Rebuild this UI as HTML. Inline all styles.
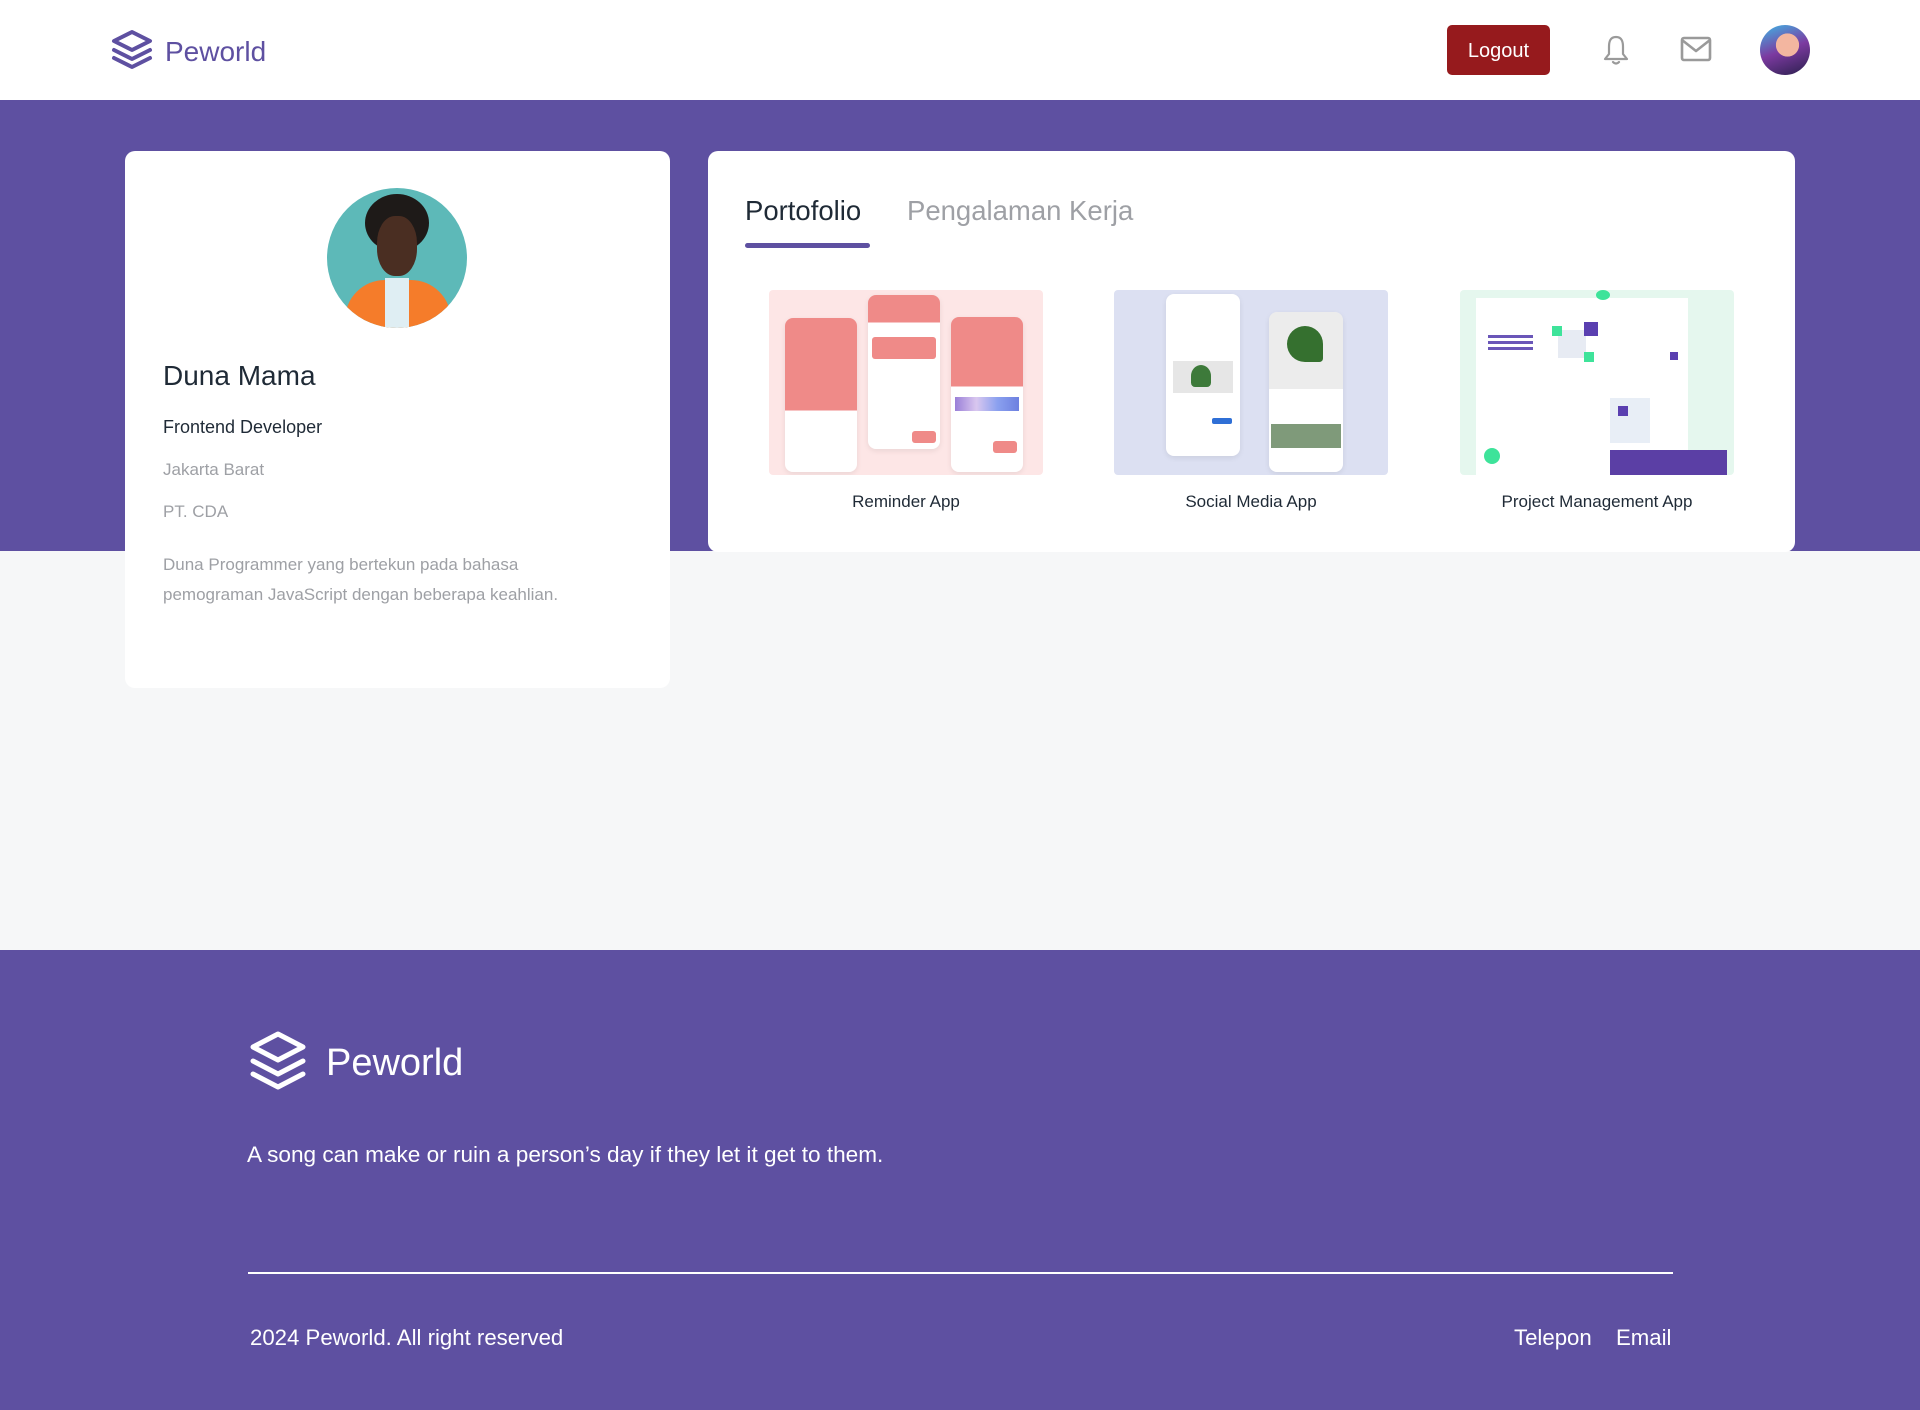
<!DOCTYPE html>
<html><head><meta charset="utf-8">
<style>
*{margin:0;padding:0;box-sizing:border-box}
body{width:1920px;height:1410px;position:relative;background:#F6F7F8;font-family:"Liberation Sans",sans-serif;overflow:hidden}
.abs{position:absolute}
.hdr{left:0;top:0;width:1920px;height:100px;background:#fff}
.band{left:0;top:100px;width:1920px;height:451px;background:#5E50A1}
.card{background:#fff;border-radius:10px}
.foot{left:0;top:950px;width:1920px;height:460px;background:#5E50A1}
.t{position:absolute;white-space:nowrap}
.ph{position:absolute;background:#fff;border-radius:8px;box-shadow:0 2px 6px rgba(0,0,0,.08)}
</style></head><body>
<div class="abs hdr"></div>
<svg class="abs" style="left:110px;top:29px" width="44" height="42" viewBox="0 0 44 42" fill="none" stroke="#5E50A1" stroke-width="4" stroke-linejoin="round" stroke-linecap="round"><path d="M22 3 L40 12 L22 21 L4 12 Z"/><path d="M4 21 L22 30 L40 21"/><path d="M4 29 L22 38 L40 29"/></svg>
<div class="t" style="left:165px;top:36px;font-size:28px;color:#5E50A1">Peworld</div>
<div class="abs" style="left:1447px;top:25px;width:103px;height:50px;background:#961A1D;border-radius:5px;color:#fff;font-size:20px;text-align:center;line-height:52px">Logout</div>
<svg class="abs" style="left:1600px;top:34px" width="32" height="32" viewBox="0 0 32 32" fill="none" stroke="#9a9a9a" stroke-width="2.2" stroke-linecap="round" stroke-linejoin="round"><path d="M16 3 C10 3 9 8 9 13 L9 20 L5 25 L27 25 L23 20 L23 13 C23 8 22 3 16 3Z"/><path d="M13 28 Q16 31 19 28"/></svg>
<svg class="abs" style="left:1680px;top:36px" width="32" height="26" viewBox="0 0 32 26" fill="none" stroke="#9a9a9a" stroke-width="2.6" stroke-linejoin="round"><rect x="2" y="2" width="28" height="22" rx="2"/><path d="M2 4 L16 15 L30 4"/></svg>
<div class="abs" style="left:1760px;top:25px;width:50px;height:50px;border-radius:50%;background:radial-gradient(circle at 55% 40%,#f3b6a0 0 28%,transparent 29%),linear-gradient(160deg,#3fb6e6,#7c3aa0 50%,#2a1f4d)"></div>

<div class="abs band"></div>
<div class="abs" style="left:0;top:551px;width:1920px;height:399px;background:#F6F7F8"></div>

<div class="abs card" style="left:125px;top:151px;width:545px;height:537px"></div>
<div class="abs" style="left:327px;top:188px;width:140px;height:140px;border-radius:50%;overflow:hidden;background:#5DB9B8">
 <div class="abs" style="left:18px;top:92px;width:106px;height:70px;border-radius:40px 40px 0 0;background:#F57C2A"></div>
 <div class="abs" style="left:58px;top:90px;width:24px;height:50px;background:#dfeef3"></div>
 <div class="abs" style="left:38px;top:6px;width:64px;height:58px;border-radius:50%;background:#1e1a18"></div>
 <div class="abs" style="left:50px;top:28px;width:40px;height:60px;border-radius:45%;background:#4a2e22"></div>
</div>
<div class="t" style="left:163px;top:360px;font-size:28px;color:#1F2A36">Duna Mama</div>
<div class="t" style="left:163px;top:417px;font-size:18px;color:#1F2A36">Frontend Developer</div>
<div class="t" style="left:163px;top:460px;font-size:17px;color:#9EA0A5">Jakarta Barat</div>
<div class="t" style="left:163px;top:502px;font-size:17px;color:#9EA0A5">PT. CDA</div>
<div class="t" style="left:163px;top:550px;font-size:17px;color:#9EA0A5;line-height:30px">Duna Programmer yang bertekun pada bahasa<br>pemograman JavaScript dengan beberapa keahlian.</div>

<div class="abs card" style="left:708px;top:151px;width:1087px;height:401px"></div>
<div class="t" style="left:745px;top:195px;font-size:27.5px;color:#1F2A36">Portofolio</div>
<div class="t" style="left:907px;top:195px;font-size:27.5px;color:#9EA0A5">Pengalaman Kerja</div>
<div class="abs" style="left:745px;top:243px;width:125px;height:5px;border-radius:3px;background:#5E50A1"></div>

<!-- thumb 1 -->
<div class="abs" style="left:769px;top:290px;width:274px;height:185px;background:#FDE6E6;border-radius:4px;overflow:hidden">
 <div class="ph" style="left:16px;top:28px;width:72px;height:154px;background:linear-gradient(#EF8A88 0 60%,#fff 60%)"></div>
 <div class="ph" style="left:99px;top:5px;width:72px;height:154px;background:linear-gradient(#EF8A88 0 18%,#fff 18%)"><div class="abs" style="left:4px;top:42px;width:64px;height:22px;background:#EF8A88;border-radius:3px"></div><div class="abs" style="left:44px;top:136px;width:24px;height:12px;background:#EF8A88;border-radius:3px"></div></div>
 <div class="ph" style="left:182px;top:27px;width:72px;height:155px;background:linear-gradient(#EF8A88 0 45%,#fff 45%)"><div class="abs" style="left:4px;top:80px;width:64px;height:14px;background:linear-gradient(90deg,#9a7fd8,#d9c7ef,#8aa0ef,#6d80e0)"></div><div class="abs" style="left:42px;top:124px;width:24px;height:12px;background:#EF8A88;border-radius:3px"></div></div>
</div>
<div class="t" style="left:769px;top:492px;width:274px;text-align:center;font-size:17px;color:#1F2A36">Reminder App</div>
<!-- thumb 2 -->
<div class="abs" style="left:1114px;top:290px;width:274px;height:185px;background:#DCE0F2;border-radius:4px;overflow:hidden">
 <div class="ph" style="left:52px;top:4px;width:74px;height:162px"><div class="abs" style="left:7px;top:67px;width:60px;height:32px;background:#e6e6e6"><div class="abs" style="left:18px;top:4px;width:20px;height:22px;border-radius:50% 50% 20% 20%;background:#3d7a3a"></div></div><div class="abs" style="left:46px;top:124px;width:20px;height:6px;background:#2f6fd6;border-radius:2px"></div></div>
 <div class="ph" style="left:155px;top:22px;width:74px;height:160px;background:linear-gradient(#ececec 0 48%,#fff 48%)"><div class="abs" style="left:18px;top:14px;width:36px;height:36px;border-radius:50% 50% 10% 50%;background:#35702f"></div><div class="abs" style="left:2px;top:112px;width:70px;height:24px;background:#7f9a7a"></div></div>
</div>
<div class="t" style="left:1114px;top:492px;width:274px;text-align:center;font-size:17px;color:#1F2A36">Social Media App</div>
<!-- thumb 3 -->
<div class="abs" style="left:1460px;top:290px;width:274px;height:185px;background:#E5F7EE;border-radius:4px;overflow:hidden">
 <div class="abs" style="left:16px;top:8px;width:212px;height:177px;background:#fff"></div>
 <div class="abs" style="left:28px;top:45px;width:45px;height:16px;background:repeating-linear-gradient(#6a56b8 0 3px,transparent 3px 6px)"></div>
 <div class="abs" style="left:98px;top:40px;width:28px;height:28px;background:#e7ebf3"></div>
 <div class="abs" style="left:124px;top:32px;width:14px;height:14px;background:#5a3fb0"></div>
 <div class="abs" style="left:92px;top:36px;width:10px;height:10px;background:#3ee39a"></div>
 <div class="abs" style="left:124px;top:62px;width:10px;height:10px;background:#3ee39a"></div>
 <div class="abs" style="left:210px;top:62px;width:8px;height:8px;background:#5a3fb0"></div>
 <div class="abs" style="left:150px;top:108px;width:40px;height:45px;background:#e8eef6"></div>
 <div class="abs" style="left:158px;top:116px;width:10px;height:10px;background:#5a3fb0"></div>
 <div class="abs" style="left:150px;top:160px;width:117px;height:25px;background:#5B3FA5"></div>
 <div class="abs" style="left:24px;top:158px;width:16px;height:16px;border-radius:50%;background:#3ee39a"></div>
 <div class="abs" style="left:136px;top:0;width:14px;height:10px;border-radius:50%;background:#3ee39a"></div>
</div>
<div class="t" style="left:1460px;top:492px;width:274px;text-align:center;font-size:17px;color:#1F2A36">Project Management App</div>

<div class="abs foot"></div>
<svg class="abs" style="left:248px;top:1030px" width="60" height="62" viewBox="0 0 60 62" fill="none" stroke="#fff" stroke-width="5" stroke-linejoin="round" stroke-linecap="round"><path d="M30 4 L55 17 L30 30 L5 17 Z"/><path d="M5 31 L30 44 L55 31"/><path d="M5 44 L30 57 L55 44"/></svg>
<div class="t" style="left:326px;top:1042px;font-size:38px;color:#fff">Peworld</div>
<div class="t" style="left:247px;top:1142px;font-size:22.6px;color:#fff">A song can make or ruin a person’s day if they let it get to them.</div>
<div class="abs" style="left:248px;top:1272px;width:1425px;height:2px;background:#fff"></div>
<div class="t" style="left:250px;top:1325px;font-size:22.2px;color:#fff">2024 Peworld. All right reserved</div>
<div class="t" style="left:1514px;top:1325px;font-size:22.2px;color:#fff">Telepon</div>
<div class="t" style="left:1616px;top:1325px;font-size:22.2px;color:#fff">Email</div>
</body></html>
